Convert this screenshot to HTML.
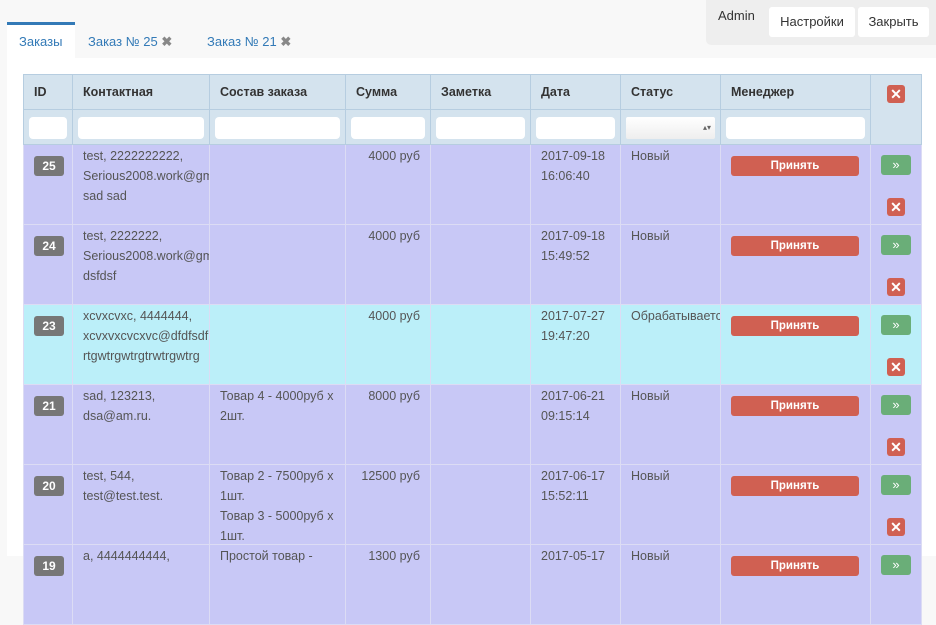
<!DOCTYPE html>
<html><head><meta charset="utf-8"><style>
*{box-sizing:border-box;margin:0;padding:0}
body{width:936px;height:556px;overflow:hidden;background:#f8f8f8;font-family:"Liberation Sans",sans-serif;position:relative}
.topbox{position:absolute;left:706px;top:0;width:236px;height:45px;background:#eeeeee;border-radius:0 0 0 5px}
.admin{position:absolute;left:718px;top:8px;font-size:13px;color:#333}
.tbtn{position:absolute;top:7px;height:30px;background:#fff;border-radius:3px;font-size:13px;color:#333;text-align:center;line-height:30px}
.tab{position:absolute;top:22px;height:36px;font-size:13px;color:#337ab7;line-height:40px}
.tab.active{background:#fff;border-top:3px solid #337ab7;line-height:34px}
.xg{color:#888;font-weight:bold;font-size:13px}
.panel{position:absolute;left:7px;top:58px;width:929px;height:498px;background:#fff}
table{position:absolute;left:23px;top:74px;border-collapse:collapse;table-layout:fixed;width:898px;font-size:12.5px;color:#555}
td,th{border:1px solid #b6cde0;vertical-align:top;overflow:hidden;white-space:nowrap}
th{background:#d4e3ee;height:35px;text-align:left;padding:10px 10px 0;font-weight:bold;color:#333;font-size:12.5px}
tr.f td{background:#d4e3ee;height:35px;padding:7px 5px 0}
.inp{height:22px;background:#fff;border-radius:4px}
tr.r td{background:#c8c8f6;height:80px;padding:1px 10px 0;line-height:20px;border-color:#dcdcf4}
tr.r td>div.w{height:76px;overflow:visible}
tr.c td{background:#bbeff9}
.badge{display:inline-block;background:#777;color:#fff;font-weight:bold;font-size:12px;border-radius:3px;width:30px;height:20px;line-height:20px;text-align:center;margin-top:10px}
.acc{display:block;margin-top:10px;width:128px;height:20px;background:#d06052;color:#fff;font-weight:bold;font-size:11.5px;text-align:center;line-height:20px;border-radius:3px}
.go{display:block;width:30px;height:20px;background:#6aae78;border-radius:3px;color:#fff;text-align:center;line-height:19px;font-size:13px;margin:10px 0 0 0}
.del{display:block;width:18px;height:18px;background:#d06052;border-radius:3px;color:#fff;text-align:center;line-height:18px;font-size:14px;font-weight:bold}
</style></head><body>
<div class="topbox"></div>
<div class="admin">Admin</div>
<div class="tbtn" style="left:769px;width:86px">Настройки</div>
<div class="tbtn" style="left:858px;width:71px">Закрыть</div>
<div class="tab active" style="left:7px;width:68px;padding-left:12px">Заказы</div>
<div class="tab" style="left:88px">Заказ № 25 <span class="xg">✖</span></div>
<div class="tab" style="left:207px">Заказ № 21 <span class="xg">✖</span></div>
<div class="panel"></div>
<table>
<colgroup><col style="width:49px"><col style="width:137px"><col style="width:136px"><col style="width:85px"><col style="width:100px"><col style="width:90px"><col style="width:100px"><col style="width:150px"><col style="width:51px"></colgroup>
<tr><th>ID</th><th>Контактная</th><th>Состав заказа</th><th>Сумма</th><th>Заметка</th><th>Дата</th><th>Статус</th><th>Менеджер</th><th rowspan="2" style="padding:10px 0 0 16px"><span class="del">✕</span></th></tr>
<tr class="f"><td><div class="inp"></div></td><td><div class="inp"></div></td><td><div class="inp"></div></td><td><div class="inp"></div></td><td><div class="inp"></div></td><td><div class="inp"></div></td><td><div class="inp" style="border-radius:2px;background:linear-gradient(#fff,#eee);text-align:right;font-size:8px;line-height:22px;padding-right:4px;color:#666">▴▾</div></td><td><div class="inp"></div></td></tr>
<tr class="r"><td><div class="w"><span class="badge">25</span></div></td><td><div class="w">test, 2222222222,<br>Serious2008.work@gmail<br>sad sad</div></td><td></td><td style="text-align:right">4000 руб</td><td></td><td>2017-09-18<br>16:06:40</td><td>Новый</td><td><span class="acc">Принять</span></td><td style="padding:0 0 0 10px"><span class="go">»</span><span class="del" style="margin:23px 0 0 6px">✕</span></td></tr>
<tr class="r"><td><div class="w"><span class="badge">24</span></div></td><td>test, 2222222,<br>Serious2008.work@gmail<br>dsfdsf</td><td></td><td style="text-align:right">4000 руб</td><td></td><td>2017-09-18<br>15:49:52</td><td>Новый</td><td><span class="acc">Принять</span></td><td style="padding:0 0 0 10px"><span class="go">»</span><span class="del" style="margin:23px 0 0 6px">✕</span></td></tr>
<tr class="r c"><td><div class="w"><span class="badge">23</span></div></td><td>xcvxcvxc, 4444444,<br>xcvxvxcvcxvc@dfdfsdf<br>rtgwtrgwtrgtrwtrgwtrg</td><td></td><td style="text-align:right">4000 руб</td><td></td><td>2017-07-27<br>19:47:20</td><td>Обрабатывается</td><td><span class="acc">Принять</span></td><td style="padding:0 0 0 10px"><span class="go">»</span><span class="del" style="margin:23px 0 0 6px">✕</span></td></tr>
<tr class="r"><td><div class="w"><span class="badge">21</span></div></td><td>sad, 123213,<br>dsa@am.ru.</td><td>Товар 4 - 4000руб x<br>2шт.</td><td style="text-align:right">8000 руб</td><td></td><td>2017-06-21<br>09:15:14</td><td>Новый</td><td><span class="acc">Принять</span></td><td style="padding:0 0 0 10px"><span class="go">»</span><span class="del" style="margin:23px 0 0 6px">✕</span></td></tr>
<tr class="r"><td><div class="w"><span class="badge">20</span></div></td><td>test, 544,<br>test@test.test.</td><td><div class="w">Товар 2 - 7500руб x<br>1шт.<br>Товар 3 - 5000руб x<br>1шт.</div></td><td style="text-align:right">12500 руб</td><td></td><td>2017-06-17<br>15:52:11</td><td>Новый</td><td><span class="acc">Принять</span></td><td style="padding:0 0 0 10px"><span class="go">»</span><span class="del" style="margin:23px 0 0 6px">✕</span></td></tr>
<tr class="r"><td><div class="w"><span class="badge">19</span></div></td><td>a, 4444444444,</td><td>Простой товар -</td><td style="text-align:right">1300 руб</td><td></td><td>2017-05-17</td><td>Новый</td><td><span class="acc">Принять</span></td><td style="padding:0 0 0 10px"><span class="go">»</span></td></tr>
</table>
</body></html>
